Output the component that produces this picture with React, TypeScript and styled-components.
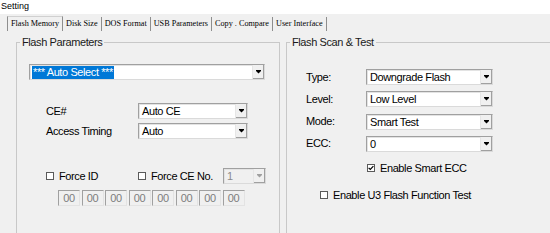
import React from "react";
import styled, { createGlobalStyle, css } from "styled-components";

const GlobalStyle = createGlobalStyle`
  html, body {
    margin: 0;
    padding: 0;
    background: #f0f0f0;
  }
  body {
    font-family: "Liberation Sans", Arial, sans-serif;
    color: #000;
  }
`;

const Window = styled.div`
  width: 550px;
  height: 233px;
  overflow: hidden;
  background: #f0f0f0;
  display: flex;
  flex-direction: column;
`;

const TitleBar = styled.div`
  flex: none;
  height: 14px;
  background: #fff;
  font-size: 9px;
  line-height: 12px;
  padding-left: 1px;
`;

const TabStrip = styled.div`
  flex: none;
  display: flex;
  height: 14px;
  margin-top: 3px;
  padding-left: 7px;
`;

const Tab = styled.div<{ $active?: boolean }>`
  font-family: "Liberation Serif", "Times New Roman", serif;
  font-size: 8.2px;
  line-height: 13px;
  padding: 0 3px;
  white-space: nowrap;
  border-right: 1px solid #8e8e8e;
  ${(p) =>
    p.$active &&
    css`
      border-left: 1px solid #8e8e8e;
      border-top: 1px solid #d0d0d0;
      margin-top: -1px;
    `}
`;

const Panels = styled.div`
  display: flex;
  gap: 6px;
  padding: 5px 0 0 16px;
`;

const Group = styled.fieldset<{ $width: number }>`
  flex: none;
  margin: 0;
  padding: 0;
  width: ${(p) => p.$width}px;
  height: 220px;
  box-sizing: border-box;
  border: 1px solid #c8c8c8;
  min-width: 0;
`;

const Legend = styled.legend`
  margin-left: 3px;
  padding: 0 2px;
  font-size: 11px;
  letter-spacing: -0.4px;
  line-height: 13px;
  color: #1a1a1a;
`;

const LeftBody = styled.div`
  display: flex;
  flex-direction: column;
  align-items: flex-start;
  padding: 15px 0 0 12px;
`;

const FieldGrid = styled.div<{ $label: number; $gap: number; $top: number; $left: number }>`
  display: grid;
  grid-template-columns: ${(p) => p.$label}px auto;
  row-gap: ${(p) => p.$gap}px;
  align-items: center;
  margin-top: ${(p) => p.$top}px;
  padding-left: ${(p) => p.$left}px;
`;

const Label = styled.div`
  font-size: 11px;
  letter-spacing: -0.4px;
  line-height: 13px;
  white-space: nowrap;
`;

const ForceRow = styled.div`
  display: grid;
  grid-template-columns: 92px 85px auto;
  align-items: center;
  height: 16px;
  margin-top: 29px;
  padding-left: 17px;
`;

const HexRow = styled.div`
  display: grid;
  grid-template-columns: repeat(8, 22px);
  column-gap: 1.5px;
  margin-top: 6px;
  padding-left: 29px;
`;

const HexBox = styled.div`
  height: 16px;
  box-sizing: border-box;
  background: #f0f0f0;
  border: 1px solid #a0a0a0;
  border-right-color: #e3e3e3;
  border-bottom-color: #e3e3e3;
  font-size: 11px;
  letter-spacing: -0.3px;
  line-height: 14px;
  text-align: center;
  color: #7d7d7d;
`;

const RightBody = styled.div`
  display: flex;
  flex-direction: column;
  align-items: flex-start;
  padding: 20px 0 0 19px;
`;

const CheckRow = styled.label<{ $top: number; $left: number }>`
  display: flex;
  align-items: center;
  gap: 5px;
  height: 13px;
  margin-top: ${(p) => p.$top}px;
  padding-left: ${(p) => p.$left}px;
  font-size: 11px;
  letter-spacing: -0.4px;
  white-space: nowrap;
`;

const CheckBox = styled.span`
  width: 8px;
  height: 8px;
  box-sizing: border-box;
  flex: none;
  border: 1px solid #5a5a5a;
  background: #fff;
  display: flex;
  align-items: center;
  justify-content: center;
`;

const SelectFrame = styled.div<{ $width: number; $disabled?: boolean }>`
  width: ${(p) => p.$width}px;
  height: 16px;
  box-sizing: border-box;
  display: flex;
  background: ${(p) => (p.$disabled ? "#f0f0f0" : "#fff")};
  border: 1px solid #a0a0a0;
  border-right-color: #dadada;
  border-bottom-color: #dadada;
  box-shadow: inset 1px 1px 0 #e3e3e3;
`;

const SelectValue = styled.div<{ $disabled?: boolean }>`
  flex: 1;
  min-width: 0;
  padding-left: 3px;
  font-size: 11px;
  letter-spacing: -0.4px;
  line-height: 14px;
  white-space: nowrap;
  overflow: hidden;
  color: ${(p) => (p.$disabled ? "#8a8a8a" : "#000")};
`;

const Highlight = styled.span`
  display: inline-block;
  background: #0078d7;
  color: #fff;
  padding: 0 1px;
  margin-left: -1px;
  line-height: 13px;
`;

const SelectButton = styled.div`
  flex: none;
  width: 11px;
  background: #f0f0f0;
  border-left: 1px solid #e6e6e6;
  box-shadow: inset -1px -1px 0 #a0a0a0;
  display: flex;
  align-items: center;
  justify-content: center;
`;

const InlineCheck = styled.div`
  display: flex;
  align-items: center;
  gap: 5px;
  font-size: 11px;
  letter-spacing: -0.4px;
  white-space: nowrap;
`;

const Arrow = ({ color = "#000" }: { color?: string }) => (
  <svg width="5" height="4" viewBox="0 0 5 4">
    <rect x="0" y="0" width="5" height="1" fill={color} />
    <polygon points="0,1 5,1 2.5,3.6" fill={color} />
  </svg>
);

const Select = ({
  value,
  width,
  disabled,
  selected,
}: {
  value: string;
  width: number;
  disabled?: boolean;
  selected?: boolean;
}) => (
  <SelectFrame $width={width} $disabled={disabled}>
    <SelectValue $disabled={disabled}>
      {selected ? <Highlight>{value}</Highlight> : value}
    </SelectValue>
    <SelectButton>
      <Arrow color={disabled ? "#a0a0a0" : "#000"} />
    </SelectButton>
  </SelectFrame>
);

const Check = ({ label, checked }: { label: string; checked?: boolean }) => (
  <>
    <CheckBox>
      {checked && (
        <svg width="6" height="6" viewBox="0 0 6 6">
          <path d="M0.6 2.8 L2.3 4.5 L5.4 1.2" stroke="#000" strokeWidth="1.2" fill="none" />
        </svg>
      )}
    </CheckBox>
    <span>{label}</span>
  </>
);

const tabs = ["Flash Memory", "Disk Size", "DOS Format", "USB Parameters", "Copy . Compare", "User Interface"];

const scanRows = [
  { label: "Type:", value: "Downgrade Flash" },
  { label: "Level:", value: "Low Level" },
  { label: "Mode:", value: "Smart Test" },
  { label: "ECC:", value: "0" },
];

export default function App() {
  return (
    <>
      <GlobalStyle />
      <Window>
        <TitleBar>Setting</TitleBar>
        <TabStrip>
          {tabs.map((t, i) => (
            <Tab key={t} $active={i === 0}>
              {t}
            </Tab>
          ))}
        </TabStrip>
        <Panels>
          <Group $width={264}>
            <Legend>Flash Parameters</Legend>
            <LeftBody>
              <Select value="*** Auto Select ***" width={236} selected />
              <FieldGrid $label={92} $gap={4} $top={23} $left={17}>
                <Label>CE#</Label>
                <Select value="Auto CE" width={110} />
                <Label>Access Timing</Label>
                <Select value="Auto" width={110} />
              </FieldGrid>
              <ForceRow>
                <InlineCheck>
                  <Check label="Force ID" />
                </InlineCheck>
                <InlineCheck>
                  <Check label="Force CE No." />
                </InlineCheck>
                <Select value="1" width={43} disabled />
              </ForceRow>
              <HexRow>
                {Array.from({ length: 8 }).map((_, i) => (
                  <HexBox key={i}>00</HexBox>
                ))}
              </HexRow>
            </LeftBody>
          </Group>
          <Group $width={290}>
            <Legend>Flash Scan &amp; Test</Legend>
            <RightBody>
              <FieldGrid $label={60} $gap={6.3} $top={0} $left={0}>
                {scanRows.map((r) => (
                  <React.Fragment key={r.label}>
                    <Label>{r.label}</Label>
                    <Select value={r.value} width={127} />
                  </React.Fragment>
                ))}
              </FieldGrid>
              <CheckRow $top={9.6} $left={61}>
                <Check label="Enable Smart ECC" checked />
              </CheckRow>
              <CheckRow $top={14} $left={14}>
                <Check label="Enable U3 Flash Function Test" />
              </CheckRow>
            </RightBody>
          </Group>
        </Panels>
      </Window>
    </>
  );
}
